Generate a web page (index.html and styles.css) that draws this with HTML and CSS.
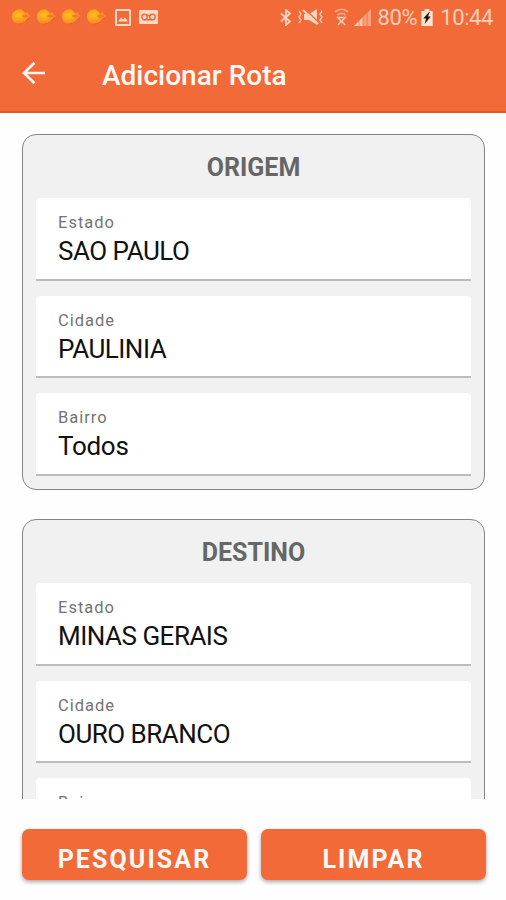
FILE: index.html
```html
<!DOCTYPE html>
<html lang="pt-BR">
<head>
    <meta charset="utf-8">
    <title>Adicionar Rota</title>
    <meta name="viewport" content="width=device-width, initial-scale=1">
    <link rel="stylesheet" href="styles.css">
</head>
<body>
    <header class="header">
        <div class="status">
            <div class="status-left">
                <svg class="comet" viewBox="0 0 22 20">
                    <defs>
                        <radialGradient id="gold" cx="0.35" cy="0.4" r="0.65">
                            <stop offset="0" stop-color="#fdc01a"/>
                            <stop offset="0.6" stop-color="#fa9c20"/>
                            <stop offset="1" stop-color="#f5802c"/>
                        </radialGradient>
                        <g id="comet">
                            <path d="M2 13c3 6 10 6 14 1l4-3-3-1-5 4z" fill="#d9501f" opacity="0.7"/>
                            <path d="M1 9c0-4 4-7 8-7 3 0 4 3 6 4l3-1v2l3 2-4 3c-2 4-6 5-10 5-4 0-6-4-6-8z" fill="url(#gold)"/>
                            <path d="M11 9l4-2 4 2-4 2z" fill="#f57a26"/>
                        </g>
                    </defs>
                    <use href="#comet"/>
                </svg>
                <svg class="comet" viewBox="0 0 22 20"><use href="#comet"/></svg>
                <svg class="comet" viewBox="0 0 22 20"><use href="#comet"/></svg>
                <svg class="comet" viewBox="0 0 22 20"><use href="#comet"/></svg>
                <svg class="picture" width="16" height="17" viewBox="0 0 16 17">
                    <rect x="1" y="1" width="14" height="15" rx="0.5" fill="none" stroke="#ffd9c6" stroke-width="2"/>
                    <path d="M3 12.500l3-4 2 2 2-2 3 4z" fill="#ffd9c6"/>
                </svg>
                <svg class="voicemail" width="19" height="14" viewBox="0 0 19 14">
                    <rect width="19" height="14" rx="1" fill="#ffd9c6"/>
                    <g fill="none" stroke="#ee6a3a" stroke-width="1.400">
                        <circle cx="5.500" cy="7" r="2.700"/>
                        <circle cx="13.500" cy="7" r="2.700"/>
                        <path d="M5.500 9.700h8M8 5.500h3"/>
                    </g>
                </svg>
            </div>
            <div class="status-right">
                <svg class="bluetooth" width="12" height="17" viewBox="0 0 12 17">
                    <path d="M1 4.500l9 8-4 3.500v-15l4 3.500-9 8" fill="none" stroke="#ffd3be" stroke-width="1.800"/>
                </svg>
                <svg class="mute" width="26" height="18" viewBox="0 0 26 18">
                    <path d="M6 6h5l8-5v16l-8-5h-5z" fill="#ffd3be"/>
                    <path d="M7 1.500l14 13" stroke="#f26a37" stroke-width="1.600"/>
                    <path d="M5 2l15 14" stroke="#ffd3be" stroke-width="2.200"/>
                    <path d="M1 3l2 3-2 3 2 3-2 3M24 3l-2 3 2 3-2 3 2 3" fill="none" stroke="#ffc2a6" stroke-width="1.500"/>
                </svg>
                <svg class="wifi" width="15" height="18" viewBox="0 0 15 18">
                    <g fill="none" stroke="#fbaa87" stroke-width="1.700">
                        <path d="M1 4c4-3.500 9-3.500 13 0M3.500 7c3-2.400 5-2.400 8 0"/>
                        <path d="M4 9.500h7l-3.500 4zM7.500 13l-3.500 4M7.500 13l3.500 4" stroke="#ffc8ae"/>
                    </g>
                </svg>
                <svg class="signal" width="17" height="17" viewBox="0 0 17 17">
                    <path d="M0 17L17 0v17z" fill="#f9a27f"/>
                    <path d="M0 17l9-9v9z" fill="#ffcdb6"/>
                    <path d="M5 8v9M9 4v13M13 0v17" stroke="#f26a37" stroke-width="0.800"/>
                </svg>
                <span class="percent">80%</span>
                <svg class="battery" width="12" height="17" viewBox="0 0 12 18">
                    <path d="M3.500 0h5v2H12v16H0V2h3.500z" fill="#ffe3d5"/>
                    <path d="M8.500 3L2 10h3l-1.500 6L10 8H7l2-5z" fill="#25100a"/>
                </svg>
                <span class="clock">10:44</span>
            </div>
        </div>
        <div class="toolbar">
            <svg class="back" width="24" height="24" viewBox="0 0 24 24">
                <path d="M23 12H2M12.500 1.800L2 12l10.500 10.200" fill="none" stroke="#fff8f4" stroke-width="2.600"/>
            </svg>
            <h1 class="title">Adicionar Rota</h1>
        </div>
    </header>

    <main class="content">
        <section class="card">
            <h2 class="card-title">ORIGEM</h2>
            <div class="field">
                <div class="label">Estado</div>
                <div class="value">SAO PAULO</div>
            </div>
            <div class="field">
                <div class="label">Cidade</div>
                <div class="value">PAULINIA</div>
            </div>
            <div class="field">
                <div class="label">Bairro</div>
                <div class="value mixed">Todos</div>
            </div>
        </section>
        <section class="card">
            <h2 class="card-title">DESTINO</h2>
            <div class="field">
                <div class="label">Estado</div>
                <div class="value">MINAS GERAIS</div>
            </div>
            <div class="field">
                <div class="label">Cidade</div>
                <div class="value">OURO BRANCO</div>
            </div>
            <div class="field">
                <div class="label">Bairro</div>
            </div>
        </section>
    </main>

    <footer class="actions">
        <button class="button">PESQUISAR</button>
        <button class="button">LIMPAR</button>
    </footer>
</body>
</html>
```
FILE: styles.css
```css
* {
    box-sizing: border-box;
}
body {
    font-family: Roboto, "Liberation Sans", sans-serif;
    display: flex;
    flex-direction: column;
    height: 900px;
    margin: 0;
    background-color: #fefefe;
    overflow: hidden;
}
svg {
    display: block;
    flex: none;
}
.header {
    flex: none;
    height: 113px;
    background-color: #f26a37;
    border-bottom: 2px solid #dd5a1c;
}
.status {
    display: flex;
    justify-content: space-between;
    height: 36px;
    padding: 0 13px 2px 11px;
    color: #ffd0ba;
    font-size: 22px;
    letter-spacing: -0.400px;
}
.status-left,
.status-right {
    display: flex;
    align-items: center;
}
.comet {
    width: 21px;
    height: 20px;
    margin-right: 4px;
}
.picture {
    margin-left: 4px;
}
.voicemail {
    margin-left: 8px;
}
.mute {
    margin-left: 6px;
}
.wifi {
    margin-left: 10px;
}
.signal {
    margin-left: 5px;
}
.percent {
    margin-left: 7px;
}
.battery {
    margin-left: 4px;
}
.clock {
    margin-left: 7px;
}
.toolbar {
    display: flex;
    align-items: center;
    height: 77px;
    padding: 0 22px 2px;
}
.back {
    margin-bottom: 2px;
}
.title {
    margin: 3px 0 0 56px;
    color: #fff8f4;
    font-size: 28px;
    font-weight: 500;
}
.content {
    flex: none;
    height: 686px;
    padding: 21px 21px 0 22px;
    overflow: hidden;
}
.card {
    height: 356px;
    margin-bottom: 29px;
    padding: 0 13px;
    background-color: #f1f1f1;
    border: 1px solid #858585;
    border-radius: 14px;
}
.card-title {
    margin: 0;
    height: 63px;
    line-height: 65px;
    color: #666;
    font-size: 25px;
    font-weight: 700;
    text-align: center;
}
.field {
    height: 82.500px;
    margin-bottom: 15.200px;
    padding: 15px 22px 0;
    background-color: #fff;
    border-bottom: 2px solid #bcbcbc;
    border-radius: 4px 4px 0 0;
}
.label {
    color: #737373;
    font-size: 16.500px;
    line-height: 20px;
    letter-spacing: 1px;
}
.value {
    margin-top: 2px;
    color: #111;
    font-size: 26px;
    line-height: 33px;
    letter-spacing: -0.500px;
}
.mixed {
    letter-spacing: -0.300px;
}
.actions {
    display: flex;
    gap: 14px;
    padding: 30px 20px 0 22px;
}
.button {
    flex: 1;
    height: 51px;
    padding: 9px 0 0;
    background-color: #f26a37;
    border: none;
    border-radius: 7px;
    box-shadow: 0 2px 4px rgba(0, 0, 0, 0.35);
    color: #fff8f4;
    font-family: inherit;
    font-size: 25px;
    font-weight: 700;
    letter-spacing: 2.100px;
}
```
